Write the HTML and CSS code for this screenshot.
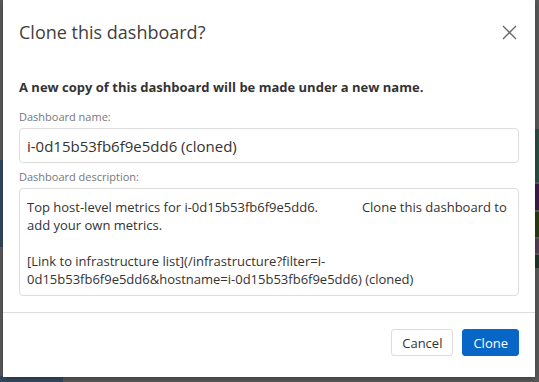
FILE: index.html
```html
<!DOCTYPE html>
<html lang="en">

<head>
    <meta charset="UTF-8">
    <meta name="viewport" content="width=device-width, initial-scale=1.0">
    <title>Clone dashboard</title>
    <link rel="stylesheet" href="styles.css">
</head>

<body>
    <!-- dimmed dashboard behind the dialog -->
    <div class="dashboard">
        <div class="dash-left">
            <div class="dash-block dash-blue"></div>
            <div class="dash-block dash-blue-bottom"></div>
        </div>
        <div class="dash-right">
            <div class="bar bar-teal"></div>
            <div class="bar bar-purple"></div>
            <div class="bar bar-green"></div>
            <div class="bar bar-mauve"></div>
            <div class="bar bar-dark"></div>
        </div>
    </div>

    <div class="modal">
        <div class="modal-header">
            <h2 class="modal-title">Clone this dashboard?</h2>
            <button class="modal-close" aria-label="Close">
                <svg width="15" height="15" viewBox="0 0 15 15">
                    <path d="M1 1L14 14M14 1L1 14" stroke="#666" stroke-width="1.3" fill="none" />
                </svg>
            </button>
        </div>
        <div class="modal-body">
            <p class="intro">A new copy of this dashboard will be made under a new name.</p>
            <label class="field-label" for="name">Dashboard name:</label>
            <input class="field-input" id="name" type="text" value="i-0d15b53fb6f9e5dd6 (cloned)">
            <label class="field-label field-label-desc" for="desc">Dashboard description:</label>
            <textarea class="field-textarea" id="desc">Top host-level metrics for i-0d15b53fb6f9e5dd6.             Clone this dashboard to add your own metrics.

[Link to infrastructure list](/infrastructure?filter=i-0d15b53fb6f9e5dd6&amp;hostname=i-0d15b53fb6f9e5dd6) (cloned)</textarea>
        </div>
        <div class="modal-footer">
            <button class="btn btn-default">Cancel</button>
            <button class="btn btn-primary">Clone</button>
        </div>
    </div>
</body>

</html>
```

FILE: styles.css
```css
* {
    box-sizing: border-box;
}

body {
    margin: 0;
    position: relative;
    font-family: "Open Sans", "Liberation Sans", sans-serif;
    color: #333;
    overflow: hidden;
}

.dashboard {
    display: flex;
    height: 382px;
    background-color: #5a5a5a;
}

.dash-left {
    display: flex;
    flex-direction: column;
    width: 63px;
    padding-top: 160px;
}

.dash-blue {
    height: 87px;
    background-color: #34495f;
}

.dash-blue-bottom {
    height: 6px;
    margin-top: auto;
    background-color: #34495f;
}

.dash-right {
    display: flex;
    flex-direction: column;
    gap: 2px;
    width: 6px;
    margin-left: auto;
    padding-top: 129px;
}

.bar-teal {
    height: 53px;
    background-color: #2a4d44;
}

.bar-purple {
    height: 26px;
    background-color: #3c1b4a;
}

.bar-green {
    height: 25px;
    background-color: #283d12;
}

.bar-mauve {
    height: 14px;
    background-color: #523e55;
}

.bar-dark {
    height: 13px;
    background-color: #1f362b;
}

/* dialog */
.modal {
    position: absolute;
    top: 0;
    left: 3px;
    width: 532px;
    height: 377px;
    background-color: #fff;
    box-shadow: 0 2px 6px rgba(0, 0, 0, .3);
}

.modal-header {
    display: flex;
    align-items: center;
    justify-content: space-between;
    height: 64px;
    padding: 0 16px;
}

.modal-title {
    margin: 0;
    font-size: 18px;
    font-weight: 400;
    color: #404040;
}

.modal-close {
    display: flex;
    padding: 0;
    margin-right: 2px;
    border: none;
    background: none;
    cursor: pointer;
}

.modal-body {
    display: flex;
    flex-direction: column;
    padding: 14px 16px 16px;
    border-bottom: 1px solid #ddd;
}

.intro {
    margin: 0;
    font-size: 13px;
    font-weight: 700;
    line-height: 18px;
}

.field-label {
    margin-top: 13px;
    font-size: 11px;
    line-height: 16px;
    color: #777;
}

.field-label-desc {
    margin-top: 6px;
}

.field-input,
.field-textarea {
    margin-top: 3px;
    width: 100%;
    border: 1px solid #ddd;
    border-radius: 4px;
    font-family: inherit;
    color: #333;
    outline: none;
}

.field-input {
    height: 35px;
    padding: 0 7px;
    font-size: 15px;
}

.field-textarea {
    height: 108px;
    padding: 9px 7px;
    font-size: 13px;
    line-height: 18px;
    resize: none;
    overflow: hidden;
}

.modal-footer {
    display: flex;
    justify-content: flex-end;
    gap: 9px;
    padding: 16px;
}

.btn {
    height: 27px;
    padding: 0 10px;
    border-radius: 3px;
    font-family: inherit;
    font-size: 13px;
    cursor: pointer;
}

.btn-default {
    border: 1px solid #ddd;
    background-color: #fff;
    color: #333;
}

.btn-primary {
    border: 1px solid #0866c6;
    background-color: #0866c6;
    color: #fff;
}
```
